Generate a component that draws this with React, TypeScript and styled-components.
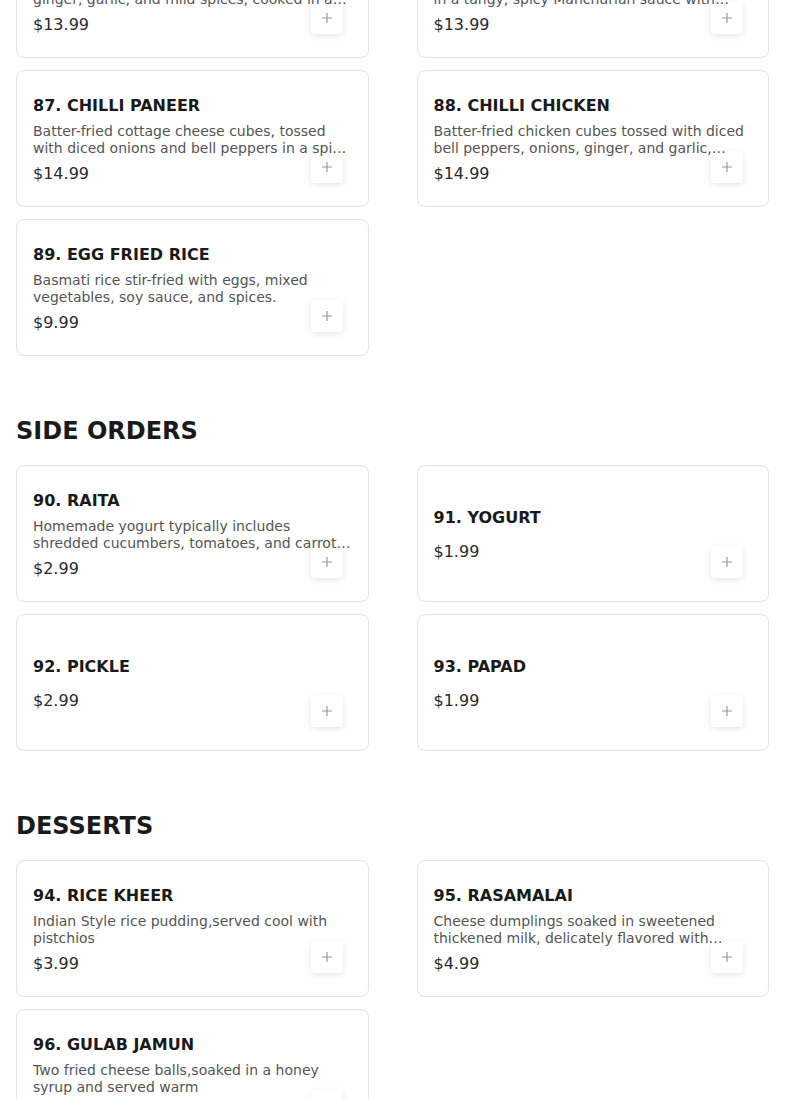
import styled, { createGlobalStyle } from "styled-components";

type MenuItem = {
  id: number;
  name: string;
  description?: string;
  price: number;
};

type Section = {
  title?: string;
  items: MenuItem[];
};

const sections: Section[] = [
  {
    items: [
      {
        id: 85,
        name: "VEG HAKKA NOODLES",
        description:
          "Stir-fried noodles with fresh vegetables, ginger, garlic, and mild spices, cooked in a hot wok.",
        price: 13.99,
      },
      {
        id: 86,
        name: "VEG MANCHURIAN",
        description:
          "Deep-fried vegetable dumplings, fully tossed in a tangy, spicy Manchurian sauce with scallions.",
        price: 13.99,
      },
      {
        id: 87,
        name: "CHILLI PANEER",
        description:
          "Batter-fried cottage cheese cubes, tossed with diced onions and bell peppers in a spicy chilli sauce.",
        price: 14.99,
      },
      {
        id: 88,
        name: "CHILLI CHICKEN",
        description:
          "Batter-fried chicken cubes tossed with diced bell peppers, onions, ginger, and garlic, sautéed in a spicy sauce.",
        price: 14.99,
      },
      {
        id: 89,
        name: "EGG FRIED RICE",
        description:
          "Basmati rice stir-fried with eggs, mixed vegetables, soy sauce, and spices.",
        price: 9.99,
      },
    ],
  },
  {
    title: "SIDE ORDERS",
    items: [
      {
        id: 90,
        name: "RAITA",
        description:
          "Homemade yogurt typically includes shredded cucumbers, tomatoes, and carrots, with spices.",
        price: 2.99,
      },
      { id: 91, name: "YOGURT", price: 1.99 },
      { id: 92, name: "PICKLE", price: 2.99 },
      { id: 93, name: "PAPAD", price: 1.99 },
    ],
  },
  {
    title: "DESSERTS",
    items: [
      {
        id: 94,
        name: "RICE KHEER",
        description: "Indian Style rice pudding,served cool with pistchios",
        price: 3.99,
      },
      {
        id: 95,
        name: "RASAMALAI",
        description:
          "Cheese dumplings soaked in sweetened thickened milk, delicately flavored with cardamom.",
        price: 4.99,
      },
      {
        id: 96,
        name: "GULAB JAMUN",
        description: "Two fried cheese balls,soaked in a honey syrup and served warm",
        price: 3.99,
      },
    ],
  },
];

const GlobalStyle = createGlobalStyle`
  html, body {
    margin: 0;
    padding: 0;
    background: #fff;
    overflow: hidden;
  }
  body {
    font-family: "DejaVu Sans", Verdana, sans-serif;
    color: #1a1a1a;
  }
  * {
    box-sizing: border-box;
  }
`;

// the screenshot starts part-way down the menu
const Page = styled.main`
  padding: 0 16px;
  margin-top: -79px;
`;

const MenuSection = styled.section`
  & + & {
    margin-top: 60px;
  }
`;

const SectionTitle = styled.h2`
  margin: 0 0 19px;
  font-size: 24px;
  line-height: 30px;
  font-weight: 700;
  color: #1a1a1a;
`;

const Grid = styled.div`
  display: grid;
  grid-template-columns: 1fr 1fr;
  column-gap: 48px;
  row-gap: 12px;
`;

const Card = styled.article`
  position: relative;
  height: 137px;
  padding: 2px 16px 0;
  border: 1px solid #e4e4e4;
  border-radius: 8px;
  background: #fff;
  display: flex;
  flex-direction: column;
  justify-content: center;
`;

const ItemName = styled.h3`
  margin: 0;
  font-size: 16px;
  line-height: 19px;
  font-weight: 700;
  color: #1a1a1a;
`;

// positioned so the text paints over the add button where they meet
const Description = styled.p`
  position: relative;
  margin: 8px 0 7px;
  font-size: 14px;
  line-height: 17px;
  color: #555;
  display: -webkit-box;
  -webkit-line-clamp: 2;
  -webkit-box-orient: vertical;
  overflow: hidden;
`;

const Price = styled.div`
  font-size: 16px;
  line-height: 19px;
  color: #2a2a2a;
`;

const AddButton = styled.button`
  position: absolute;
  right: 25px;
  bottom: 23px;
  width: 32px;
  height: 32px;
  padding: 0;
  border: none;
  border-radius: 4px;
  background: #fff;
  box-shadow: 0 2px 6px rgba(0, 0, 0, 0.1);
  display: flex;
  align-items: center;
  justify-content: center;
  cursor: pointer;
`;

const PlusIcon = () => (
  <svg width="12" height="12" viewBox="0 0 12 12" aria-hidden="true">
    <path d="M6 1v10M1 6h10" stroke="#9a9a9a" strokeWidth="1.2" fill="none" />
  </svg>
);

const ItemCard = ({ item }: { item: MenuItem }) => (
  <Card>
    <AddButton aria-label={`Add ${item.name}`}>
      <PlusIcon />
    </AddButton>
    <ItemName>
      {item.id}. {item.name}
    </ItemName>
    <Description>{item.description ?? ""}</Description>
    <Price>${item.price.toFixed(2)}</Price>
  </Card>
);

export default function App() {
  return (
    <>
      <GlobalStyle />
      <Page>
        {sections.map((section, i) => (
          <MenuSection key={section.title ?? i}>
            {section.title && <SectionTitle>{section.title}</SectionTitle>}
            <Grid>
              {section.items.map((item) => (
                <ItemCard key={item.id} item={item} />
              ))}
            </Grid>
          </MenuSection>
        ))}
      </Page>
    </>
  );
}
